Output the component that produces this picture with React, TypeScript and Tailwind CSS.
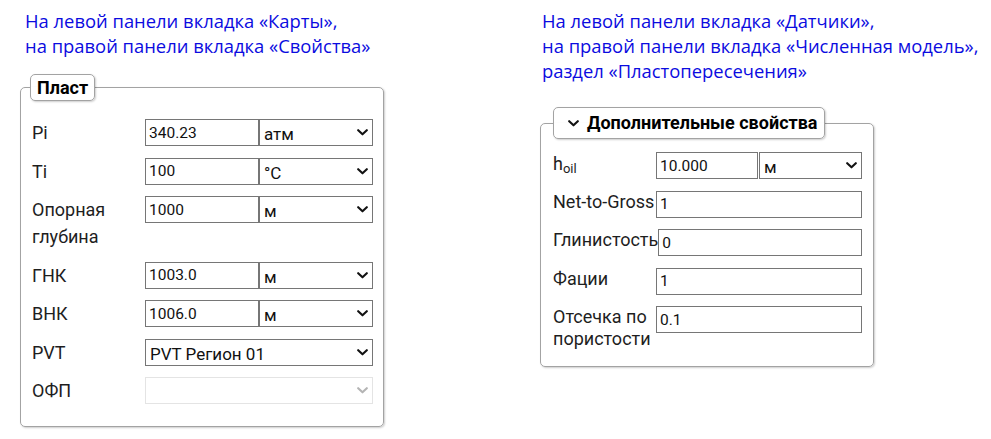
import React from 'react';

const note = "font-['Open_Sans',sans-serif] text-[18.4px] leading-[25px] text-[#0b0be0]";
const form = "font-['Roboto','Liberation_Sans',sans-serif] text-[#1e1e1e]";

function Chevron({ className }: { className?: string }) {
  return (
    <svg width="11" height="7" viewBox="0 0 11 7" className={className} fill="none">
      <path d="M1.2 1.2L5.5 5.3L9.8 1.2" stroke="currentColor" strokeWidth="2.1" strokeLinecap="round" strokeLinejoin="round" />
    </svg>
  );
}

function TextInput({ value, className = '' }: { value: string; className?: string }) {
  return (
    <input
      size={1}
      defaultValue={value}
      className={`h-[27px] min-w-0 border border-[#767676] bg-white px-[3px] text-[15.5px] text-[#111] outline-none ${className}`}
    />
  );
}

function Select({ value, disabled, className = '' }: { value: string; disabled?: boolean; className?: string }) {
  return (
    <div className={`relative h-[27px] min-w-0 ${className}`}>
      <select
        disabled={disabled}
        defaultValue={value}
        className={`h-full w-full appearance-none bg-white pl-[4px] pt-[2px] text-[17px] outline-none ${
          disabled ? 'border border-[#e4e4e4]' : 'border border-[#767676] text-[#111]'
        }`}
      >
        <option value={value}>{value}</option>
      </select>
      <Chevron
        className={`pointer-events-none absolute right-[5px] top-[10px] ${disabled ? 'text-[#b4b4b4]' : 'text-[#111]'}`}
      />
    </div>
  );
}

function Label({ children, className = '' }: { children: React.ReactNode; className?: string }) {
  return <span className={`text-[18px] ${className}`}>{children}</span>;
}

function PlastPanel() {
  const rows: [string, string, string][] = [
    ['Pi', '340.23', 'атм'],
    ['Ti', '100', '°C'],
    ['Опорная глубина', '1000', 'м'],
    ['ГНК', '1003.0', 'м'],
    ['ВНК', '1006.0', 'м'],
  ];
  return (
    <fieldset
      className={`${form} w-[364px] min-w-0 rounded-[5px] border border-[#a3a3a3] pb-[22px] pl-[11px] pr-[10px] pt-[18px] shadow-[1px_1px_2px_rgba(0,0,0,0.2)]`}
    >
      <legend className="-ml-[2px] rounded-[5px] border border-[#a3a3a3] px-[6px] py-[2px] text-[18px] font-bold leading-[21px] text-black shadow-[1px_1px_2px_rgba(0,0,0,0.2)]">
        Пласт
      </legend>
      <div className="grid grid-cols-[113px_114px_1fr] gap-y-[11.5px]">
        {rows.map(([label, value, unit]) => (
          <React.Fragment key={label}>
            <Label className="w-[90px] leading-[27px]">{label}</Label>
            <TextInput value={value} className="self-start" />
            <Select value={unit} className="self-start" />
          </React.Fragment>
        ))}
        <Label className="leading-[27px]">PVT</Label>
        <Select value="PVT Регион 01" className="col-span-2" />
        <Label className="leading-[27px]">ОФП</Label>
        <Select value="" disabled className="col-span-2" />
      </div>
    </fieldset>
  );
}

function ExtraPanel() {
  // the long "Глинистость" label is allowed to push its field to the right
  const rows: [string, string, string][] = [
    ['Net-to-Gross', '1', 'w-[103px]'],
    ['Глинистость', '0', 'min-w-[103px]'],
    ['Фации', '1', 'w-[103px]'],
    ['Отсечка по пористости', '0.1', 'w-[103px]'],
  ];
  return (
    <fieldset
      className={`${form} w-[334px] min-w-0 rounded-[5px] border border-[#a3a3a3] pb-[16px] pl-[12px] pr-[11px] pt-[13px] shadow-[1px_1px_2px_rgba(0,0,0,0.2)]`}
    >
      <legend className="flex items-center gap-[8px] rounded-[5px] border border-[#a3a3a3] pl-[14px] pr-[6px] py-[4px] text-[18px] font-bold leading-[22px] text-black shadow-[1px_1px_2px_rgba(0,0,0,0.2)]">
        <Chevron className="text-[#111]" />
        Дополнительные свойства
      </legend>
      <div className="flex flex-col gap-y-[11.5px]">
        <div className="flex items-start">
          <Label className="w-[103px] shrink-0 leading-[24px]">
            h<sub className="text-[13px]">oil</sub>
          </Label>
          <TextInput value="10.000" className="w-[102px]" />
          <Select value="м" className="ml-[1px] flex-1" />
        </div>
        {rows.map(([label, value, width]) => (
          <div key={label} className="flex items-start">
            <Label className={`${width} shrink-0 leading-[22px]`}>{label}</Label>
            <TextInput value={value} className="flex-1" />
          </div>
        ))}
      </div>
    </fieldset>
  );
}

export default function App() {
  return (
    <div className="flex h-[439px] w-[991px] overflow-hidden bg-white">
      <div className="ml-[20px] flex w-[364px] flex-col pt-[8px]">
        <p className={`${note} whitespace-nowrap pl-[5px]`}>
          На левой панели вкладка «Карты»,
          <br />
          на правой панели вкладка «Свойства»
        </p>
        <div className="mt-[16px]">
          <PlastPanel />
        </div>
      </div>
      <div className="ml-[156px] flex flex-col items-start pt-[8px]">
        <p className={`${note} whitespace-nowrap pl-[2px]`}>
          На левой панели вкладка «Датчики»,
          <br />
          на правой панели вкладка «Численная модель»,
          <br />
          раздел «Пластопересечения»
        </p>
        <div className="mt-[24px]">
          <ExtraPanel />
        </div>
      </div>
    </div>
  );
}
